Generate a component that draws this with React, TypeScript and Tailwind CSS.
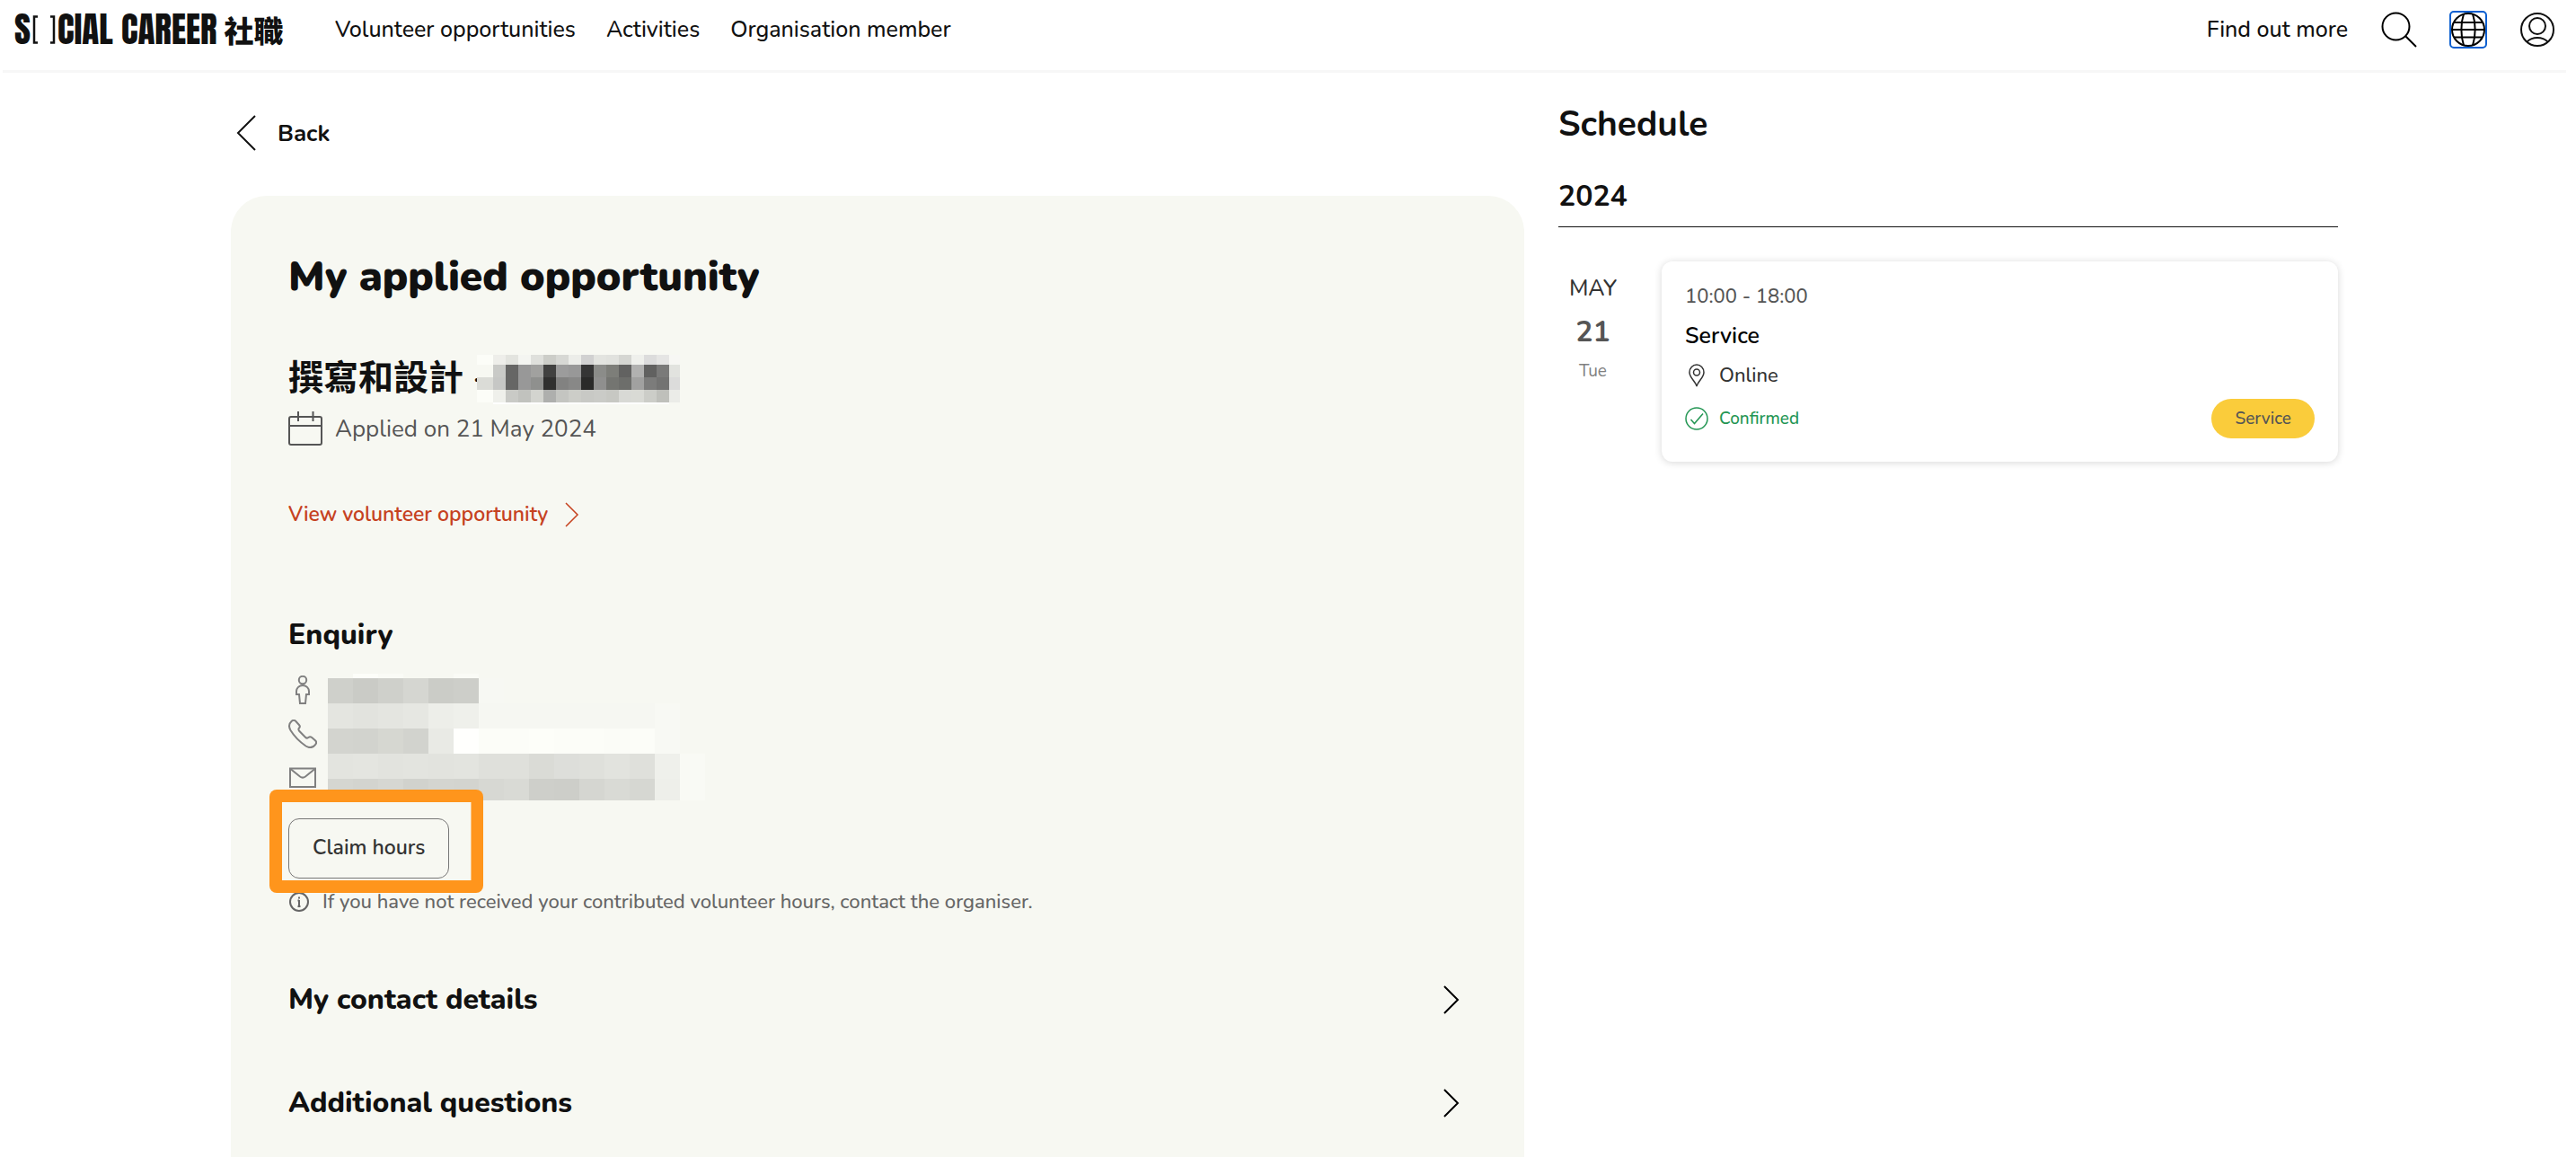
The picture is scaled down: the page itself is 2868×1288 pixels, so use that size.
import type { ReactNode } from "react";

const titleMosaic = [
  ["#fcfdf8", "#eeeeea", "#e3e4df", "#f4f5f1", "#dfe0dc", "#cccdc8", "#d7d8d4", "#ecede9", "#d1d1d1", "#e3e4e0", "#e1e2de", "#d5d6d2", "#eff0ec", "#dcdcdc", "#e5e5e4", "#f7f7f4"],
  ["#f7f8f2", "#c9cac7", "#666665", "#989898", "#a1a19f", "#414140", "#9c9c9c", "#989898", "#353535", "#8b8c89", "#7d7e79", "#626261", "#b1b1b0", "#616160", "#7a7a79", "#e2e3df"],
  ["#dbdcd7", "#c6c7c5", "#666665", "#989898", "#8f908e", "#30302f", "#828281", "#888887", "#2a2a29", "#8f8f8e", "#747571", "#6d6e6b", "#a1a1a0", "#7c7c7b", "#737372", "#dcdcdb"],
  ["#fcfdf8", "#eff0eb", "#c9cac6", "#c1c2be", "#d3d4cf", "#aeafad", "#c4c5c1", "#cccdc8", "#c8c9c5", "#cacbc7", "#c7c8c3", "#d8d9d5", "#d9dad5", "#cccdc8", "#bfc0bb", "#ebece8"],
];

const contactMosaic = [
  ["#cfd0cb", "#cacbc6", "#cfd0cb", "#d5d6d1", "#cbccc7", "#cdcec9", "#f7f8f3", "", "", "", "", "", "", "", ""],
  ["#e4e5e0", "#e2e3de", "#e4e5e0", "#e6e7e2", "#edeee9", "#eff0eb", "#f6f7f2", "#f6f7f2", "#f6f7f2", "#f6f7f2", "#f6f7f2", "#f6f7f2", "#f6f7f2", "#f8f9f4", ""],
  ["#d3d4cf", "#d2d3ce", "#d6d7d1", "#d2d3ce", "#e9eae5", "#fffffd", "#fcfdf8", "#fcfdf8", "#fdfef9", "#fcfdf8", "#fcfdf8", "#fbfcf7", "#fcfdf8", "#f8f9f4", ""],
  ["#e3e4df", "#e4e5e0", "#e2e3de", "#e3e4df", "#e2e3de", "#e3e4df", "#dfe0db", "#dfe0db", "#dadbd6", "#dddeda", "#dfe0db", "#e2e3de", "#dfe0db", "#eff0eb", "#f9faf5"],
  ["#d5d6d1", "#d3d4cf", "#d6d7d2", "#d1d2cd", "#d4d5d0", "#d3d4cf", "#d7d8d3", "#d9dad5", "#cecfca", "#cdcec9", "#d5d6d1", "#d9dad5", "#d6d7d2", "#eeefea", "#f9faf5"],
];

function TitleMosaic() {
  return (
    <svg aria-hidden="true" className="relative h-14 w-[226px] shrink-0" viewBox="0 0 226 56" shapeRendering="crispEdges">
      {titleMosaic.map((row, r) =>
        row.map((fill, c) => (
          <rect
            key={`${r}-${c}`}
            x={c === 0 ? 0 : 4 + c * 14}
            y={r === 0 ? 1 : -2 + r * 14}
            width={c === 0 ? 18 : c === 15 ? 12 : 14}
            height={r === 0 ? 11 : 14}
            fill={fill}
          />
        )),
      )}
      <rect x="18" y="54" width="196" height="2" fill="#ffffff" />
    </svg>
  );
}

function ContactMosaic() {
  return (
    <svg aria-hidden="true" className="h-[141px] w-[422px]" viewBox="0 0 422 141" shapeRendering="crispEdges">
      <rect x="28" y="0" width="28" height="5" fill="#fdfef9" />
      <rect x="56" y="0" width="28" height="5" fill="#fafbf6" />
      <rect x="140" y="0" width="28" height="5" fill="#fafbf6" />
      {contactMosaic.map((row, r) =>
        row.map((fill, c) =>
          fill ? <rect key={`${r}-${c}`} x={c * 28} y={5 + r * 28} width={28} height={r === 4 ? 24 : 28} fill={fill} /> : null,
        ),
      )}
    </svg>
  );
}

function Icon({ className, box = 40, width = 2, children }: { className: string; box?: number; width?: number; children: ReactNode }) {
  return (
    <svg aria-hidden="true" className={className} viewBox={`0 0 ${box} ${box}`} fill="none" stroke="currentColor" strokeWidth={width}>
      {children}
    </svg>
  );
}

function NavLink({ children }: { children: ReactNode }) {
  return (
    <a href="#" className="whitespace-nowrap text-[25px] leading-9 font-medium">
      {children}
    </a>
  );
}

function Header() {
  return (
    <header className="flex h-[81px] items-center justify-between border-b-3 border-[#f7f7f7] pr-3 pb-3 pl-[13px]">
      <div className="flex items-center">
        <a href="#" aria-label="Social Career" className="flex h-10 w-[303px] items-center text-[39px] leading-10">
          <span className="font-['Anton','Roboto_Condensed',sans-serif]">S</span>
          <svg aria-hidden="true" className="mx-0.5 h-8 w-[26px] shrink-0" viewBox="0 0 26 32" fill="none" stroke="currentColor" strokeWidth="2.500">
            <path d="M6 1.500H2V30.500H6M20 1.500H24V30.500H20" />
          </svg>
          <span className="whitespace-nowrap font-['Anton','Roboto_Condensed',sans-serif]">CIAL CAREER</span>
          <span className="ml-2 whitespace-nowrap font-['Noto_Sans_CJK_TC',sans-serif] text-[33px] font-black">社職</span>
        </a>
        <nav className="ml-[54px] flex gap-[34px]">
          <NavLink>Volunteer opportunities</NavLink>
          <NavLink>Activities</NavLink>
          <NavLink>Organisation member</NavLink>
        </nav>
      </div>
      <div className="flex items-center gap-[37px]">
        <NavLink>Find out more</NavLink>
        <button type="button" aria-label="Search" className="text-black">
          <Icon className="size-10">
            <circle cx="16.500" cy="16.500" r="15" />
            <path d="M27.500 27.500L39 39" />
          </Icon>
        </button>
        <button type="button" aria-label="Language" className="rounded-sm text-black outline-2 -outline-offset-1 outline-[#0b5fd0]">
          <Icon className="size-10">
            <circle cx="20" cy="20" r="18" />
            <path d="M15 2.500C11.500 13 11.500 27 15 37.500M25 2.500C28.500 13 28.500 27 25 37.500M4 12H36M2 20H38M4 28.500H36" />
          </Icon>
        </button>
        <button type="button" aria-label="Account">
          <Icon className="size-10">
            <circle cx="20" cy="20" r="18" />
            <circle cx="20" cy="16" r="9" />
            <path d="M8.500 33.500C11.500 30.500 15.500 29 20 29S28.500 30.500 31.500 33.500" />
          </Icon>
        </button>
      </div>
    </header>
  );
}

function ContactRow({ children }: { children: ReactNode }) {
  return <li className="flex h-[49px] items-center">{children}</li>;
}

function Accordion({ title }: { title: string }) {
  return (
    <button type="button" aria-expanded="false" className="flex h-[115px] w-full items-center justify-between pr-0.5 text-left">
      <span className="text-[32px] leading-11 font-extrabold">{title}</span>
      <Icon className="size-8 text-black" box={32}>
        <path d="M9 1L24 16L9 31" />
      </Icon>
    </button>
  );
}

function Opportunity() {
  return (
    <section className="flex flex-1 flex-col items-start rounded-t-[40px] bg-[#f7f8f2] px-16 pt-[60px]">
      <h1 className="text-[46px] leading-[60px] font-black">My applied opportunity</h1>
      <h2 className="mt-14 flex h-14 items-center whitespace-nowrap font-['Nunito','Lato','Noto_Sans_CJK_TC',sans-serif] text-[39px] leading-14 font-bold">
        撰寫和設計&nbsp;-
        <span className="-ml-[13px] flex">
          <TitleMosaic />
        </span>
      </h2>
      <p className="mt-2 flex h-[38px] items-center gap-[14px] text-[26px] text-[#555555]">
        <Icon className="size-[38px]" box={38}>
          <rect x="1" y="6" width="36" height="31" rx="2" />
          <path d="M1 16H37M11 0V11M27.500 0V11" />
        </Icon>
        Applied on 21 May 2024
      </p>
      <a href="#" className="mt-[57px] flex h-10 items-center text-[23px] font-semibold text-[#c6421f]">
        View volunteer opportunity
        <Icon className="ml-[13px] size-7" box={28} width={1.5}>
          <path d="M7 1L20 14L7 27" />
        </Icon>
      </a>

      <h3 className="mt-[92px] text-[32px] leading-11 font-extrabold">Enquiry</h3>
      <div className="mt-[14px] flex items-start text-[#808080]">
        <ul className="w-11">
          <ContactRow>
            <Icon className="size-8" box={32}>
              <circle cx="16" cy="5" r="4.200" />
              <path d="M16 11C11.500 11 9 14.500 9 17.500V21H12L13 31H19L20 21H23V17.500C23 14.500 20.500 11 16 11Z" />
            </Icon>
          </ContactRow>
          <ContactRow>
            <Icon className="size-8" box={32}>
              <path d="M3.500 2C5 .600 7 .600 8.200 1.800L12 6C13.200 7.300 13 8.500 12 9.500C11.200 10.300 11.200 11.500 12.200 12.800L19 19.800C20 20.800 21.300 20.800 22.300 20C23.500 19 25 19 26.200 20L30.200 23.500C31.400 24.700 31.400 26.300 30.200 27.800C27.500 31.300 23.500 32 19.500 29.500C13 25 6.500 18.500 2.500 12C.500 8.500 .800 4.500 3.500 2Z" />
            </Icon>
          </ContactRow>
          <ContactRow>
            <Icon className="size-8" box={32}>
              <rect x="2" y="5.500" width="28" height="20.500" />
              <path d="M2.500 6L13 14.500C15 16 17 16 19 14.500L29.500 6" />
            </Icon>
          </ContactRow>
        </ul>
        <div className="h-[147px] pt-[7px]">
          <ContactMosaic />
        </div>
      </div>

      <div className="relative mt-[21px]">
        <button type="button" className="h-[67px] rounded-xl border border-[#777777] px-[26px] text-[23px] font-semibold text-[#333333]">
          Claim hours
        </button>
        <span aria-hidden="true" className="pointer-events-none absolute -top-8 -right-[38px] -bottom-4 -left-[21px] z-10 rounded-lg bg-[#ff951c] [clip-path:polygon(evenodd,0_0,100%_0,100%_100%,0_100%,0_0,14px_14px,calc(100%-14px)_14px,calc(100%-14px)_calc(100%-14px),14px_calc(100%-14px),14px_14px)]" />
      </div>
      <p className="mt-[10px] flex h-8 items-center gap-[14px] text-[22px] font-medium text-[#666666]">
        <Icon className="size-6" box={24}>
          <circle cx="12" cy="12" r="10" />
          <path d="M12 10V17M12 6.500V8.500M10.500 17H13.500M10.500 10.500H12" />
        </Icon>
        If you have not received your contributed volunteer hours, contact the organiser.
      </p>

      <div className="mt-[35px] w-full">
        <Accordion title="My contact details" />
        <Accordion title="Additional questions" />
      </div>
    </section>
  );
}

function Schedule() {
  return (
    <aside className="pt-[30px]">
      <h2 className="text-[39px] leading-14 font-bold">Schedule</h2>
      <h3 className="mt-[30px] border-b border-[#111111] pb-[11px] text-[32px] leading-11 font-bold">2024</h3>
      <div className="mt-[38px] flex items-start gap-[38px]">
        <div className="flex w-[77px] flex-col items-center pt-3">
          <span className="text-[25px] leading-9 font-medium text-[#333333]">MAY</span>
          <span className="mt-[11px] text-[32px] leading-10 font-bold text-[#555555]">21</span>
          <span className="mt-[9px] text-[19px] leading-7 text-[#808080]">Tue</span>
        </div>
        <article className="flex-1 rounded-xl bg-white px-[26px] pt-[23px] pb-[26px] shadow-[0_1px_8px_rgba(0,0,0,0.16)]">
          <p className="text-[22px] leading-8 font-medium text-[#555555]">10:00 - 18:00</p>
          <h4 className="mt-3 text-[25px] leading-8 font-semibold text-black">Service</h4>
          <p className="mt-3 flex h-8 items-center gap-3 text-[22px] font-medium text-[#333333]">
            <Icon className="size-[26px]" box={26} width={1.5}>
              <path d="M13 25C12 20 5 15.500 5 9.500C5 4.800 8.600 1 13 1S21 4.800 21 9.500C21 15.500 14 20 13 25Z" />
              <circle cx="13" cy="9.500" r="3.500" />
            </Icon>
            Online
          </p>
          <div className="mt-[10px] flex items-center justify-between">
            <span className="flex items-center gap-3 text-[19px] font-medium text-[#249654]">
              <Icon className="size-[26px]" box={26} width={1.5}>
                <circle cx="13" cy="13" r="12" />
                <path d="M6.500 14L10.500 18.500L20 7.500" />
              </Icon>
              Confirmed
            </span>
            <span className="flex h-11 items-center rounded-full bg-[#facc3b] px-[26px] text-[19px] font-medium text-[#555555]">Service</span>
          </div>
        </article>
      </div>
    </aside>
  );
}

export default function App() {
  return (
    <div className="flex min-h-screen flex-col bg-white pr-[11px] pl-[3px] font-['Nunito','Lato','Noto_Sans_CJK_TC',sans-serif] text-[#111111]">
      <Header />
      <main className="mx-auto grid w-full max-w-[2346px] flex-1 grid-cols-[1440fr_868fr] gap-[38px]">
        <div className="flex flex-col pt-12">
          <button type="button" className="mb-[51px] flex h-[38px] items-center gap-3 self-start text-[26px] font-bold">
            <Icon className="size-10">
              <path d="M27 1L8 20L27 39" />
            </Icon>
            Back
          </button>
          <Opportunity />
        </div>
        <Schedule />
      </main>
    </div>
  );
}
